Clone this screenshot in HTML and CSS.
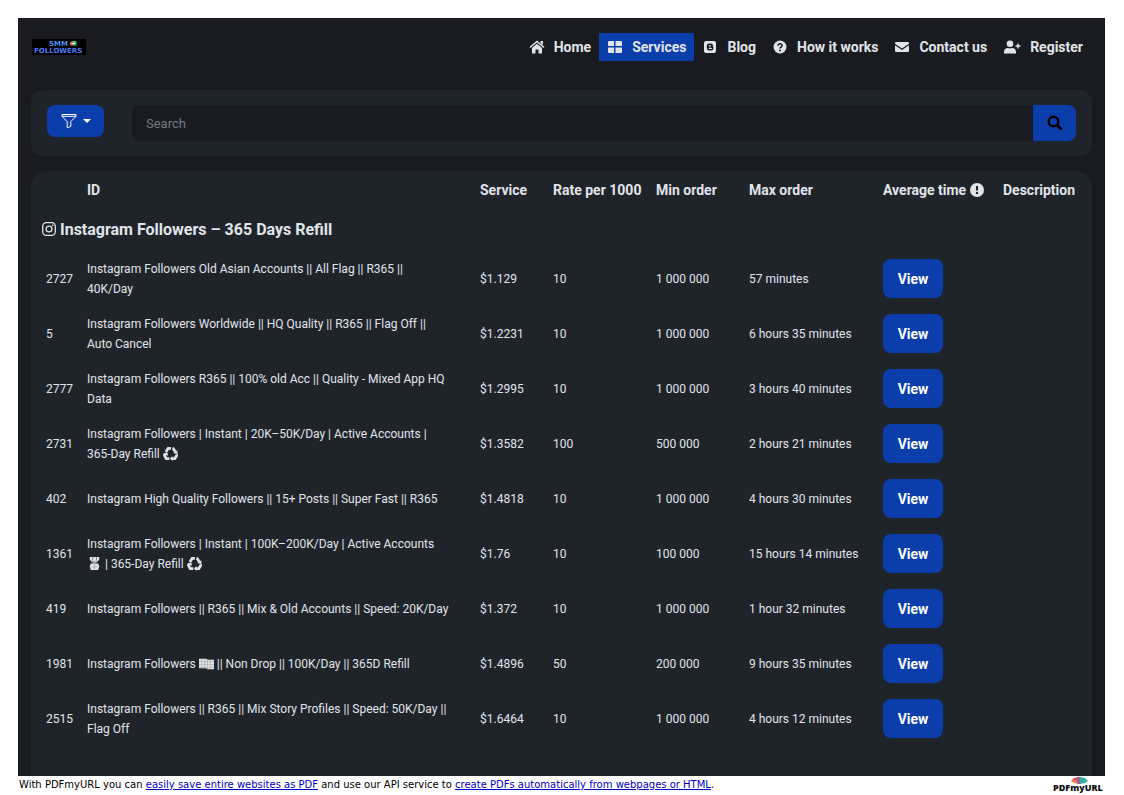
FILE: index.html
```html
<!DOCTYPE html>
<html lang="en">
<head>
    <meta charset="UTF-8">
    <meta name="viewport" content="width=device-width, initial-scale=1.0">
    <title>Services</title>
    <link rel="stylesheet" href="styles.css">
</head>
<body>
    <svg class="defs" aria-hidden="true">
        <symbol id="recycle" viewBox="0 0 16 16">
            <path d="M3 6.500 5.500 2.600h3M10 2.600l1.200.4 2 3.500M14 9l.6 1-2 3.400H9.500M6.800 13.400H3.400L1.600 10l.8-1.800" fill="none" stroke="#dfe3e8" stroke-width="3"/>
            <path d="M15.400 4.400v4L11 7.600zM10 10.600V16L7.400 13.400zM0 8.400l4.600-1.800.8 3.800z" fill="#dfe3e8"/>
        </symbol>
    </svg>

    <div class="page">
        <header class="navbar">
            <a href="#" class="brand" aria-label="SMM Followers">
                <svg width="54" height="16" viewBox="0 0 54 16">
                    <rect width="54" height="16" fill="#000"/>
                    <text x="17" y="7" class="brand-text" fill="#4d8df0">SMM</text>
                    <text x="2" y="14" class="brand-text" fill="#4a78f5">FOLLOWERS</text>
                    <path d="M38 4.500l2.500-2.500h4v4.500h-5z" fill="#35c486"/>
                    <circle cx="40" cy="4.500" r="2" fill="#ef7568"/>
                    <path d="M40 4h3v1h-3z" fill="#fff"/>
                </svg>
            </a>
            <nav class="menu">
                <a href="#">
                    <svg class="icon" viewBox="0 0 16 14"><path d="M1 7.500 8 1.500l7 6" fill="none" stroke="currentColor" stroke-width="1.600"/><path d="M11.500 1H14v4l-2.500-2zM3 8l5-4.300L13 8v5.500H9.500V9.500h-3v4H3z" fill="currentColor"/></svg>
                    Home
                </a>
                <a href="#" class="active">
                    <svg class="icon" viewBox="0 0 16 14"><path d="M2 1h5v5H1V2a1 1 0 0 1 1-1zM8.500 1H14a1 1 0 0 1 1 1v4H8.500zM1 7.500h6V13H2a1 1 0 0 1-1-1zM8.500 7.500H15V12a1 1 0 0 1-1 1H8.500z" fill="currentColor"/></svg>
                    Services
                </a>
                <a href="#">
                    <svg class="icon" viewBox="0 0 16 14"><rect x="2" y="1" width="12" height="12" rx="2" fill="currentColor"/><path d="M4.800 6a2.400 2.400 0 0 1 2.400-2.400h1.400A2.400 2.400 0 0 1 11 6c0 .6.400.4.400 1.200v.7A2.500 2.500 0 0 1 8.900 10.400H7.200A2.400 2.400 0 0 1 4.800 8z" fill="#191b20"/><path d="M7.200 5.800h1.400M7.200 8.300h2.200" stroke="currentColor" stroke-width="1.200" stroke-linecap="round"/></svg>
                    Blog
                </a>
                <a href="#">
                    <svg class="icon" viewBox="0 0 16 14"><circle cx="8" cy="7" r="6.500" fill="currentColor"/><path d="M6 5.600c.1-2.500 4.200-2.400 4.100 0 0 1.500-2 1.300-2 2.800" fill="none" stroke="#191b20" stroke-width="1.500"/><circle cx="8" cy="10.500" r="1" fill="#191b20"/></svg>
                    How it works
                </a>
                <a href="#">
                    <svg class="icon" viewBox="0 0 16 14"><path d="M1 3.200A1.200 1.200 0 0 1 2.200 2h11.600A1.200 1.200 0 0 1 15 3.200v.6L8 8.600 1 3.800zM1 5.200l7 4.700 7-4.700v5.600a1.200 1.200 0 0 1-1.200 1.200H2.200A1.200 1.200 0 0 1 1 10.800z" fill="currentColor"/></svg>
                    Contact us
                </a>
                <a href="#">
                    <svg class="icon icon-wide" viewBox="0 0 18 14"><circle cx="7" cy="3.800" r="3.300" fill="currentColor"/><path d="M1 13.500v-1.700A4 4 0 0 1 5 8l2 .5L9 8a4 4 0 0 1 4 3.800v1.700z" fill="currentColor"/><path d="M12.500 6h5M15 3.500v5" stroke="currentColor" stroke-width="1.400"/></svg>
                    Register
                </a>
            </nav>
        </header>

        <form class="toolbar">
            <button type="button" class="filter-btn" aria-label="Filter">
                <svg width="16" height="16" viewBox="0 0 16 16"><path d="M1 1.500h14v1.800L9.800 8.600v4.800l-3.600 1.400V8.600L1 3.300zM1 3.300h14" fill="none" stroke="currentColor"/></svg>
                <svg width="8" height="4" viewBox="0 0 8 4"><path d="M0 0h8L4 4z" fill="currentColor"/></svg>
            </button>
            <div class="search">
                <input type="text" placeholder="Search" aria-label="Search">
                <button type="submit" aria-label="Search">
                    <svg width="16" height="16" viewBox="0 0 16 16"><circle cx="6.500" cy="6.500" r="4.800" fill="none" stroke="currentColor" stroke-width="2.400"/><path d="m10 10 4.600 4.600" stroke="currentColor" stroke-width="2.800"/></svg>
                </button>
            </div>
        </form>

        <main class="services">
            <table>
                <colgroup>
                    <col class="col-id">
                    <col>
                    <col class="col-rate">
                    <col class="col-min">
                    <col class="col-max">
                    <col class="col-time">
                    <col class="col-view">
                    <col class="col-desc">
                </colgroup>
                <thead>
                    <tr>
                        <th></th>
                        <th>ID</th>
                        <th>Service</th>
                        <th>Rate per 1000</th>
                        <th>Min order</th>
                        <th>Max order</th>
                        <th>Average time <svg class="info" viewBox="0 0 14 14"><circle cx="7" cy="7" r="7" fill="currentColor"/><path d="M7 3v4.500" stroke="#1f242b" stroke-width="2"/><circle cx="7" cy="10" r="1.200" fill="#1f242b"/></svg></th>
                        <th>Description</th>
                    </tr>
                </thead>
                <tbody>
                    <tr class="category">
                        <td colspan="8">
                            <svg class="insta" viewBox="0 0 14 14"><g fill="none" stroke="currentColor" stroke-width="1.300"><rect x=".7" y=".7" width="12.600" height="12.600" rx="3.500"/><circle cx="7" cy="7" r="2.900"/></g><circle cx="10.700" cy="3.300" r=".9" fill="currentColor"/></svg>
                            Instagram Followers – 365 Days Refill
                        </td>
                    </tr>
                    <tr>
                        <td>2727</td>
                        <td>Instagram Followers Old Asian Accounts || All Flag || R365 ||<br>40K/Day</td>
                        <td>$1.129</td>
                        <td>10</td>
                        <td>1 000 000</td>
                        <td>57 minutes</td>
                        <td><button type="button" class="view-btn">View</button></td>
                        <td></td>
                    </tr>
                    <tr>
                        <td>5</td>
                        <td>Instagram Followers Worldwide || HQ Quality || R365 || Flag Off ||<br>Auto Cancel</td>
                        <td>$1.2231</td>
                        <td>10</td>
                        <td>1 000 000</td>
                        <td>6 hours 35 minutes</td>
                        <td><button type="button" class="view-btn">View</button></td>
                        <td></td>
                    </tr>
                    <tr>
                        <td>2777</td>
                        <td>Instagram Followers R365 || 100% old Acc || Quality - Mixed App HQ<br>Data</td>
                        <td>$1.2995</td>
                        <td>10</td>
                        <td>1 000 000</td>
                        <td>3 hours 40 minutes</td>
                        <td><button type="button" class="view-btn">View</button></td>
                        <td></td>
                    </tr>
                    <tr>
                        <td>2731</td>
                        <td>Instagram Followers | Instant | 20K–50K/Day | Active Accounts |<br>365-Day Refill <svg class="emoji"><use href="#recycle"/></svg></td>
                        <td>$1.3582</td>
                        <td>100</td>
                        <td>500 000</td>
                        <td>2 hours 21 minutes</td>
                        <td><button type="button" class="view-btn">View</button></td>
                        <td></td>
                    </tr>
                    <tr>
                        <td>402</td>
                        <td>Instagram High Quality Followers || 15+ Posts || Super Fast || R365</td>
                        <td>$1.4818</td>
                        <td>10</td>
                        <td>1 000 000</td>
                        <td>4 hours 30 minutes</td>
                        <td><button type="button" class="view-btn">View</button></td>
                        <td></td>
                    </tr>
                    <tr>
                        <td>1361</td>
                        <td>Instagram Followers | Instant | 100K–200K/Day | Active Accounts<br><svg class="emoji" viewBox="0 0 16 16"><path d="M3 1h10v3l-2 2H5L3 4z" fill="#e3e5e8"/><path d="M6 1v4M10 1v4" stroke="#777c83"/><path d="M5.500 6.500h5l-.5 1.500H6z" fill="#989da3"/><path d="M4 8h8l1 3-1 4H4l-1-4z" fill="#e3e5e8"/><path d="M5 11.500h6M8 9v5" stroke="#a9adb2"/></svg> | 365-Day Refill <svg class="emoji"><use href="#recycle"/></svg></td>
                        <td>$1.76</td>
                        <td>10</td>
                        <td>100 000</td>
                        <td>15 hours 14 minutes</td>
                        <td><button type="button" class="view-btn">View</button></td>
                        <td></td>
                    </tr>
                    <tr>
                        <td>419</td>
                        <td>Instagram Followers || R365 || Mix &amp; Old Accounts || Speed: 20K/Day</td>
                        <td>$1.372</td>
                        <td>10</td>
                        <td>1 000 000</td>
                        <td>1 hour 32 minutes</td>
                        <td><button type="button" class="view-btn">View</button></td>
                        <td></td>
                    </tr>
                    <tr>
                        <td>1981</td>
                        <td>Instagram Followers <svg class="emoji" viewBox="0 0 16 16"><path d="M0 3h8l1 1h7v10H9l-1-1H0z" fill="#e3e5e8"/><path d="M0 6h16M0 9h16M0 12h16M3 3v10M6 3v10M9 4v10M12 4v10" stroke="#a7abb0" stroke-width=".7"/></svg> || Non Drop || 100K/Day || 365D Refill</td>
                        <td>$1.4896</td>
                        <td>50</td>
                        <td>200 000</td>
                        <td>9 hours 35 minutes</td>
                        <td><button type="button" class="view-btn">View</button></td>
                        <td></td>
                    </tr>
                    <tr>
                        <td>2515</td>
                        <td>Instagram Followers || R365 || Mix Story Profiles || Speed: 50K/Day ||<br>Flag Off</td>
                        <td>$1.6464</td>
                        <td>10</td>
                        <td>1 000 000</td>
                        <td>4 hours 12 minutes</td>
                        <td><button type="button" class="view-btn">View</button></td>
                        <td></td>
                    </tr>
                </tbody>
            </table>
        </main>
    </div>

    <footer class="credit">
        <p>With PDFmyURL you can <a href="#">easily save entire websites as PDF</a> and use our API service to <a href="#">create PDFs automatically from webpages or HTML</a>.</p>
        <svg width="52" height="18" viewBox="0 0 52 18" role="img" aria-label="PDFmyURL">
            <path d="M18 5 21 2l5-1v7z" fill="#e04f55"/>
            <path d="M24 1h4v7h-4z" fill="#9a60a5"/>
            <path d="m27 1 5 1 3 3-3 2-5 1z" fill="#2fb39b"/>
            <path d="m18 5 3 2 4 1-2-4z" fill="#f18b4b"/>
            <text x="0" y="15" class="credit-logo" fill="#111">PDFmyURL</text>
        </svg>
    </footer>
</body>
</html>
```

FILE: styles.css
```css
* { box-sizing: border-box; }
body { margin: 0; background: #fff; font-family: Roboto, sans-serif; font-size: 12px; color: #e1e5ea; }
a { color: inherit; text-decoration: none; }
button, input { font-family: inherit; border: none; }
button { cursor: pointer; }
.defs { display: none; }
.page { margin: 18px 19px 0 18px; padding: 0 13px; background: #191b20; }

/* navbar */
.navbar { display: flex; align-items: center; justify-content: space-between; height: 58px; padding: 0 1px; }
.brand svg { display: block; }
.brand-text { font-family: "DejaVu Sans", sans-serif; font-size: 7px; font-weight: 700; }
.menu { display: flex; }
.menu a { display: flex; align-items: center; gap: 9px; height: 28px; padding: 0 8px; font-size: 14px; font-weight: 700; white-space: nowrap; }
.menu .active { background: #0b3eab; }
.icon { width: 16px; height: 14px; }
.icon-wide { width: 18px; }

/* filter and search */
.toolbar { display: flex; align-items: flex-start; gap: 28px; margin: 14px 0 15px; padding: 15px 16px; background: #1f242a; border-radius: 12px; }
.filter-btn { display: flex; align-items: center; justify-content: center; gap: 6px; width: 57px; height: 32px; background: #0b3eab; color: #fff; border-radius: 8px; }
.search { display: flex; flex: 1; height: 36px; }
.search input { flex: 1; min-width: 0; padding: 0 14px; background: #191b20; color: #e1e5ea; font-size: 13px; border-radius: 8px 0 0 8px; }
.search input::placeholder { color: #747b84; }
.search button { display: flex; align-items: center; justify-content: center; width: 43px; background: #0b3eab; color: #000; border-radius: 0 8px 8px 0; }

/* services table */
.services { padding-bottom: 30px; background: #1f242b; border-radius: 16px 16px 0 0; }
table { width: 100%; border-collapse: collapse; table-layout: fixed; }
.col-id { width: 50px; }
.col-rate { width: 73px; }
.col-min { width: 103px; }
.col-max { width: 93px; }
.col-time { width: 134px; }
.col-view { width: 120px; }
.col-desc { width: 95px; }
th { height: 37px; padding: 0 6px; text-align: left; font-size: 14px; font-weight: 700; white-space: nowrap; }
td { height: 55px; padding: 0 6px; line-height: 20px; }
td:first-child { padding-left: 15px; padding-right: 0; }
.category td { height: 43px; padding-left: 11px; font-size: 16px; font-weight: 700; }
.info { width: 14px; height: 14px; vertical-align: -2px; }
.insta { width: 14px; height: 14px; vertical-align: -1px; }
.emoji { width: 15px; height: 15px; vertical-align: -3px; }
.view-btn { display: block; width: 60px; height: 39px; background: #0b3eab; color: #fff; font-size: 14px; font-weight: 700; border-radius: 8px; }

.credit { display: flex; align-items: flex-start; justify-content: space-between; margin: 0 19px; font-family: "DejaVu Sans", sans-serif; font-size: 10px; line-height: 18px; color: #000; }
.credit p { margin: 0; }
.credit a { color: #0000c8; text-decoration: underline; }
.credit-logo { font-family: "Open Sans", sans-serif; font-size: 9px; font-weight: 800; }
```
